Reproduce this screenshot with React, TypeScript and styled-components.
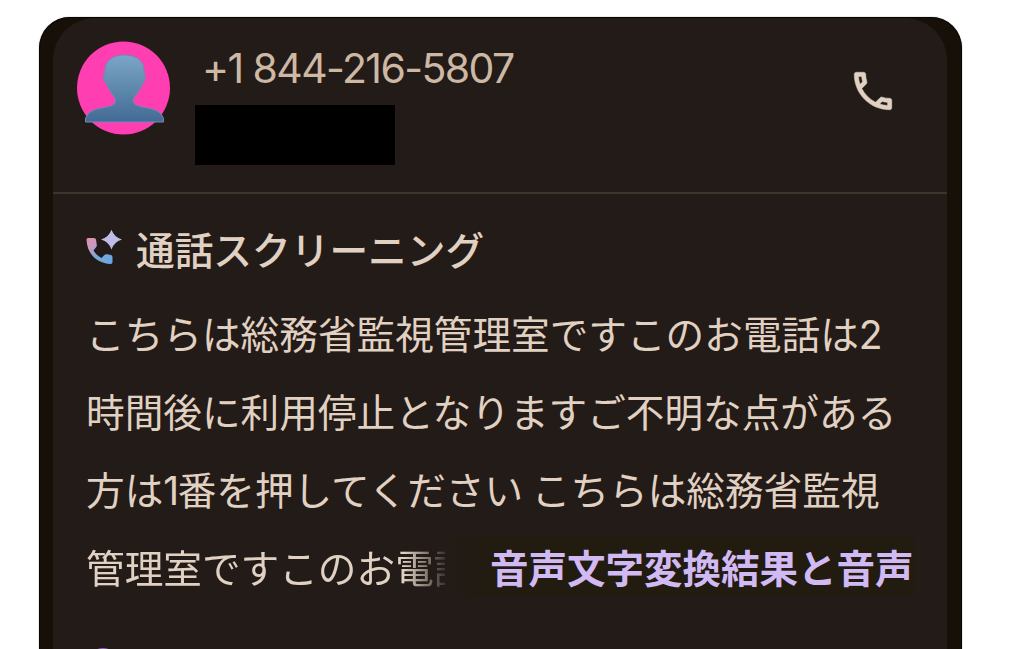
import styled, { createGlobalStyle, css } from 'styled-components'

const colors = {
  frame: '#171008',
  panel: '#231b17',
  rule: '#3f342b',
  text: '#e0d1c2',
  number: '#cdb8a4',
  link: '#d1b9f3',
  fade: '#221b10',
}

const GlobalStyle = createGlobalStyle`
  body {
    background: #fff;
    margin: 0;
    overflow: hidden;
  }

  * {
    box-sizing: border-box;
  }
`

const Page = styled.main`
  font-family: 'Noto Sans CJK JP', sans-serif;
  height: 649px;
  overflow: hidden;
  padding: 17px 62px 0 39px;
  width: 1024px;
`

const Frame = styled.div`
  background: ${colors.frame};
  border: 1px solid #080604;
  border-bottom: 0;
  border-radius: 31px 31px 0 0;
  box-shadow: 0 0 1px #444;
  height: 632px;
  padding: 0 14px 0 13px;
`

const Panel = styled.section`
  background: ${colors.panel};
  border-radius: 42px 42px 0 0;
  height: 631px;
  overflow: hidden;
`

const Header = styled.header`
  border-bottom: 2px solid ${colors.rule};
  display: flex;
  height: 176px;
  padding: 22px 49px 0 21px;
`

const Avatar = styled.svg`
  flex: none;
  height: 96px;
  width: 98px;
`

const Caller = styled.div`
  flex: 1;
  margin-left: 23px;
`

const PhoneNumber = styled.div`
  color: ${colors.number};
  font-family: 'Inter', sans-serif;
  font-size: 41px;
  height: 65px;
  letter-spacing: -1.6px;
  line-height: 56px;
  padding-left: 7px;
  white-space: nowrap;
`

const Redacted = styled.div`
  background: #000;
  height: 60px;
  width: 200px;
`

const CallIcon = styled.svg`
  flex: none;
  height: 50px;
  margin-top: 26px;
  width: 50px;
`

const Transcript = styled.div`
  padding-left: 33px;
`

const Heading = styled.h1`
  align-items: center;
  color: ${colors.text};
  display: flex;
  font-size: 38.7px;
  font-weight: 500;
  height: 60px;
  line-height: 60px;
  margin: 24px 0 0;
`

const ScreenIcon = styled.svg`
  height: 40px;
  margin: 4px 10px 0 -1px;
  width: 41px;
`

const Line = styled.p<{ $last?: boolean }>`
  color: ${colors.text};
  font-size: 38.65px;
  height: 78px;
  line-height: 78px;
  margin: 0;
  white-space: nowrap;

  ${({ $last }) => $last && css`
    display: flex;
  `}
`

const Lines = styled.div`
  margin-top: 15px;
`

const Narrow = styled.span`
  font-family: 'Inter', sans-serif;
  font-size: 39px;
  letter-spacing: -1.5px;
`

const Faded = styled.span`
  mask-image: linear-gradient(90deg, #000 318px, transparent 366px);
  overflow: hidden;
  width: 359px;
`

const MoreLink = styled.a`
  background: linear-gradient(90deg, transparent, ${colors.fade} 45px);
  color: ${colors.link};
  font-size: 38.5px;
  font-weight: 700;
  height: 62px;
  line-height: 62px;
  margin-top: 8px;
  padding-left: 45px;
`

const Accent = styled.div`
  border: 3px solid #8e62bd;
  border-radius: 50%;
  height: 32px;
  margin: 43px 0 0 1px;
  width: 32px;
`

const App = () => (
  <>
    <GlobalStyle />
    <Page>
      <Frame>
        <Panel>
          <Header>
            <Avatar viewBox="0 0 98 96">
              <defs>
                <linearGradient id="bust" x1="0" y1="0" x2="0" y2="1">
                  <stop offset="0" stopColor="#7ba6c6" />
                  <stop offset="1" stopColor="#416b94" />
                </linearGradient>
              </defs>
              <circle cx="49.5" cy="48" r="46.5" fill="#ff3eb1" />
              <path
                d="M11.5 82V79C13 73 18 70 25 68.500C34 66.500 41 66 41.500 61C41.500 57 36 53 32.500 44C29 40 28.500 36 31 32C30 21 39 15 50.500 15C62 15 71 21 70 32C72 36 71.500 40 68.500 44C65 53 59 57 59 61C60 66 67 66.500 76 68.500C83 70 88 73 89.500 79V82Z"
                fill="url(#bust)"
                stroke="#7786b9"
                strokeWidth="1"
              />
            </Avatar>
            <Caller>
              <PhoneNumber>+1 844-216-5807</PhoneNumber>
              <Redacted />
            </Caller>
            <CallIcon viewBox="0 0 24 24" fill={ colors.text } stroke={ colors.text } strokeWidth=".25">
              <path d="M6.540 5c.06.890.210 1.760.450 2.590l-1.200 1.200c-.410-1.200-.670-2.470-.760-3.790h1.510m9.860 12.020c.850.240 1.720.390 2.600.450v1.490c-1.320-.090-2.590-.350-3.800-.750l1.200-1.190M7.500 3H4c-.550 0-1 .450-1 1 0 9.390 7.610 17 17 17 .550 0 1-.450 1-1v-3.490c0-.550-.450-1-1-1-1.240 0-2.450-.200-3.570-.570-.100-.040-.210-.050-.310-.050-.260 0-.510.100-.710.290l-2.200 2.200c-2.830-1.450-5.150-3.760-6.590-6.590l2.200-2.200c.280-.280.360-.670.250-1.020C8.700 6.450 8.500 5.250 8.500 4c0-.550-.450-1-1-1z" />
            </CallIcon>
          </Header>
          <Transcript>
            <Heading>
              <ScreenIcon viewBox="0 0 41 40">
                <defs>
                  <linearGradient id="call" x1="0" y1="0" x2=".75" y2="1">
                    <stop offset="0" stopColor="#e58dab" />
                    <stop offset=".3" stopColor="#c99bc2" />
                    <stop offset=".65" stopColor="#78a8d8" />
                    <stop offset="1" stopColor="#6aa8e2" />
                  </linearGradient>
                </defs>
                <path
                  d="M1.500 9.500Q1.500 8 3 8H9Q10.500 8 11 9.500L11.800 15Q12 16 11.200 17L8.500 20.500Q11.500 25.500 16.500 28L19.500 25Q20.500 24 22 24.300L26 25Q27.500 25.500 27.500 27V32Q27.500 34 25.500 34C11 33 2 23.500 1.500 9.500Z"
                  fill="url(#call)"
                />
                <path d="M26.500-.5Q28.800 7 37 9.500Q28.800 12 26.500 19.500Q24.200 12 16 9.500Q24.200 7 26.500-.5Z" fill="#bfbcea" />
              </ScreenIcon>
              通話スクリーニング
            </Heading>
            <Lines>
              <Line>こちらは総務省監視管理室ですこのお電話は<Narrow>2</Narrow></Line>
              <Line>時間後に利用停止となりますご不明な点がある</Line>
              <Line>方は<Narrow>1</Narrow>番を押してください こちらは総務省監視</Line>
              <Line $last>
                <Faded>管理室ですこのお電話</Faded>
                <MoreLink>音声文字変換結果と音声</MoreLink>
              </Line>
            </Lines>
            <Accent />
          </Transcript>
        </Panel>
      </Frame>
    </Page>
  </>
)

export default App
